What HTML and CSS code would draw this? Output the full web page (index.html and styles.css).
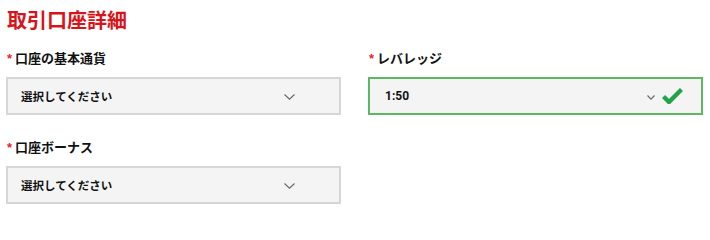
FILE: index.html
```html
<!DOCTYPE html>
<html lang="ja">
<head>
<meta charset="utf-8">
<link rel="stylesheet" href="styles.css">
</head>
<body>
<div class="page">
  <h1 class="title">取引口座詳細</h1>
  <div class="fields">
    <div class="field">
      <div class="label"><span class="req">*</span>口座の基本通貨</div>
      <div class="select">
        <span class="value">選択してください</span>
        <svg class="chev" width="11" height="6" viewBox="0 0 11 6"><path d="M0.5 0.5 L5.5 5.2 L10.5 0.5" fill="none" stroke="#666" stroke-width="1.1"/></svg>
      </div>
    </div>
    <div class="field">
      <div class="label"><span class="req">*</span>レバレッジ</div>
      <div class="select valid">
        <span class="value num">1:50</span>
        <svg class="chev small" width="8" height="5" viewBox="0 0 8 5"><path d="M0.5 0.5 L4 4.2 L7.5 0.5" fill="none" stroke="#666" stroke-width="1.1"/></svg>
        <svg class="check" width="21" height="16" viewBox="0 0 21 16"><path d="M1.5 8.5 L7 14 L19.5 1.5" fill="none" stroke="#23a346" stroke-width="4.4" stroke-linejoin="miter"/></svg>
      </div>
    </div>
    <div class="field">
      <div class="label"><span class="req">*</span>口座ボーナス</div>
      <div class="select">
        <span class="value">選択してください</span>
        <svg class="chev" width="11" height="6" viewBox="0 0 11 6"><path d="M0.5 0.5 L5.5 5.2 L10.5 0.5" fill="none" stroke="#666" stroke-width="1.1"/></svg>
      </div>
    </div>
  </div>
</div>
</body>
</html>
```
FILE: styles.css
```css
html, body {
  margin: 0;
  padding: 0;
  background: #ffffff;
}
body {
  font-family: "Noto Sans CJK JP", "Noto Sans", sans-serif;
  color: #111;
}
.page {
  padding: 8px 7px 0 6px;
}
.title {
  margin: 0 0 0 1px;
  font-size: 20px;
  line-height: 24px;
  font-weight: 700;
  color: #d7141a;
}
.fields {
  margin-top: 17px;
  display: grid;
  grid-template-columns: 335px 335px;
  column-gap: 27px;
  row-gap: 23px;
}
.label {
  font-size: 13px;
  line-height: 18px;
  font-weight: 700;
  color: #111;
  margin-bottom: 9px;
  padding-left: 1px;
}
.req {
  color: #e3262c;
  margin-right: 3px;
  font-family: "Liberation Sans", sans-serif;
}
.select {
  box-sizing: border-box;
  height: 38px;
  border: 2px solid #d6d6d6;
  background: #f4f4f4;
  display: flex;
  align-items: center;
  padding: 0 44px 0 13px;
}
.select.valid {
  border-color: #5cb860;
  padding-right: 18px;
}
.value {
  flex: 1;
  font-size: 11.5px;
  line-height: 16px;
  font-weight: 700;
  color: #111;
}
.value.num {
  font-family: "Roboto", "Liberation Sans", sans-serif;
  font-size: 12px;
  padding-left: 2px;
}
.chev {
  display: block;
  margin-top: 2px;
}
.chev.small {
  margin-right: 7px;
  margin-top: 3px;
}
.check {
  display: block;
}
```
